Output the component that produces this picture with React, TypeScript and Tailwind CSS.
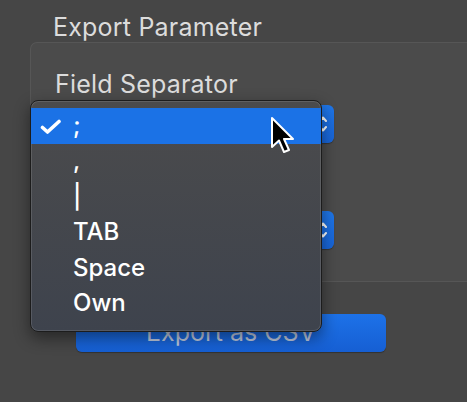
import React from "react";

const font = { fontFamily: "Inter, 'Noto Sans', sans-serif" };

function Chevrons() {
  return (
    <svg width="8" height="18" viewBox="0 0 8 18" fill="none" stroke="white" strokeWidth="2" strokeLinecap="round" strokeLinejoin="round">
      <path d="M1 6 L4 2.5 L7 6" />
      <path d="M1 12 L4 15.5 L7 12" />
    </svg>
  );
}

function Popup() {
  return (
    <div className="ml-[22px] w-[281px] h-[38px] rounded-[6px] bg-gradient-to-b from-[#1f76e8] to-[#1864d6] flex items-center justify-end pr-[7px] shadow-[0_1px_1px_rgba(0,0,0,0.3)]">
      <Chevrons />
    </div>
  );
}

export default function App() {
  const items = [";", ",", "|", "TAB", "Space", "Own"];
  return (
    <div className="relative w-[467px] h-[402px] overflow-hidden bg-[#464646] text-[#e6e6e6]" style={font}>
      <div className="pl-[53px] pt-[13px] text-[25px] leading-[28px] tracking-[0.2px] text-[#dcdcdc]">Export Parameter</div>
      <div className="ml-[30px] mt-[1px] w-[460px] rounded-l-[7px] border border-r-0 border-[#565656] bg-[#4b4b4b] pt-[27px] pb-[32px]">
        <div className="pl-[24px] text-[25px] leading-[28px] tracking-[0.2px] text-[#dcdcdc]">Field Separator</div>
        <div className="mt-[7px]">
          <Popup />
        </div>
        <div className="mt-[20px] pl-[24px] text-[25px] leading-[28px] text-[#dcdcdc]">Decimal Separator</div>
        <div className="mt-[20px]">
          <Popup />
        </div>
      </div>
      <div className="ml-[76px] mt-[32px] w-[310px] h-[38px] rounded-[6px] bg-gradient-to-b from-[#1d72e8] to-[#165fd3] flex items-center justify-center text-[25px] text-[#bfcadf] shadow-[0_1px_1px_rgba(0,0,0,0.3)]">
        Export as CSV
      </div>

      {/* dropdown menu */}
      <div className="absolute left-[30px] top-[100px] w-[292px] h-[232px] rounded-[8px] border border-[#1c1c1c] bg-gradient-to-b from-[#4b4b4c] to-[#3e434d] shadow-[0_6px_16px_rgba(0,0,0,0.45),inset_0_0_0_1px_rgba(255,255,255,0.12)] pt-[7px] text-white">
        {items.map((it, i) => (
          <div
            key={it}
            className={
              "relative h-[35.5px] flex items-center pl-[42px] text-[24px] leading-[34px] font-medium " +
              (i === 0 ? "bg-[#1b72e6]" : "")
            }
          >
            {i === 0 && (
              <svg className="absolute left-[9px] top-[11px]" width="22" height="16" viewBox="0 0 22 16" fill="none" stroke="white" strokeWidth="3.6" strokeLinecap="round" strokeLinejoin="round">
                <path d="M2.5 8.5 L7.5 13 L19 2.5" />
              </svg>
            )}
            {it}
          </div>
        ))}
      </div>

      {/* cursor */}
      <svg className="absolute left-[270px] top-[116px]" width="28" height="40" viewBox="0 0 28 40">
        <path d="M2 2 L2 31 L9 24.5 L14 36 L19 34 L14 23 L23 23 Z" fill="black" stroke="white" strokeWidth="2" strokeLinejoin="round" />
      </svg>
    </div>
  );
}
